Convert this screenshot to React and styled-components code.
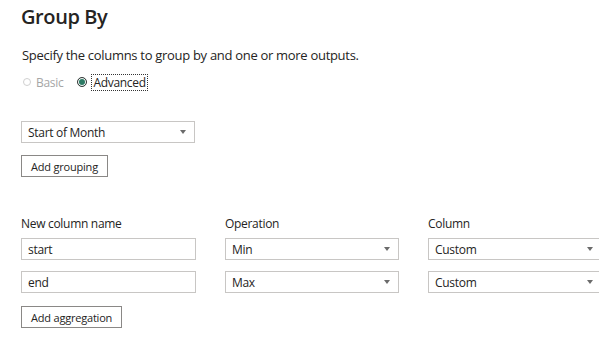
import React from 'react'
import styled, { createGlobalStyle } from 'styled-components'

const GlobalStyle = createGlobalStyle`
  html, body {
    margin: 0;
    padding: 0;
    background: #ffffff;
  }
  body {
    font-family: 'Open Sans', 'Noto Sans', sans-serif;
    color: #252423;
    letter-spacing: -0.3px;
    overflow: hidden;
  }
`

const Page = styled.div`
  width: 599px;
  height: 345px;
  padding: 2px 0 0 21px;
  box-sizing: border-box;
  overflow: hidden;
`

const Title = styled.h1`
  margin: 0;
  font-size: 20px;
  font-weight: 600;
  line-height: 30px;
  color: #252423;
  letter-spacing: -0.4px;
`

const Subtitle = styled.p`
  margin: 14px 0 0 1px;
  font-size: 13px;
  line-height: 18px;
  color: #252423;
`

const RadioRow = styled.div`
  display: flex;
  align-items: center;
  margin-top: 10px;
  height: 16px;
  gap: 12px;
`

const RadioOption = styled.label`
  display: flex;
  align-items: center;
  gap: 5px;
  font-size: 12px;
  color: ${(p) => (p.disabled ? '#a6a6a6' : '#252423')};
`

const RadioDot = styled.span`
  width: ${(p) => (p.checked ? 10 : 8)}px;
  height: ${(p) => (p.checked ? 10 : 8)}px;
  border-radius: 50%;
  box-sizing: border-box;
  border: 1px solid ${(p) => (p.checked ? '#3b3b3b' : '#d0d0d0')};
  background: ${(p) => (p.checked ? '#2b7a64' : '#fff')};
  box-shadow: ${(p) => (p.checked ? 'inset 0 0 0 1px #fff' : 'none')};
  margin-left: 2px;
`

const FocusText = styled.span`
  outline: 1px dotted #333;
  padding: 0 1px;
  line-height: 15px;
`

const Select = styled.div`
  width: 174px;
  height: 22px;
  box-sizing: border-box;
  border: 1px solid #c8c6c4;
  display: flex;
  align-items: center;
  justify-content: space-between;
  padding: 0 8px 0 6px;
  font-size: 12px;
  color: #252423;
  background: #fff;
  flex-shrink: 0;
`

const Caret = styled.span`
  width: 0;
  height: 0;
  border-left: 3.5px solid transparent;
  border-right: 3.5px solid transparent;
  border-top: 4px solid #6b6b6b;
`

const Button = styled.button`
  height: 22px;
  box-sizing: border-box;
  border: 1px solid #8a8886;
  background: #fff;
  padding: 0 9px;
  font-family: inherit;
  font-size: 11px;
  letter-spacing: -0.2px;
  color: #252423;
  display: block;
`

const Grouping = styled.div`
  margin-top: 31px;
  display: flex;
  flex-direction: column;
  gap: 12px;
  align-items: flex-start;
`

const Aggregations = styled.div`
  margin-top: 39px;
  display: grid;
  grid-template-columns: 175px 174px 174px;
  column-gap: 29px;
  row-gap: 11px;
  align-items: center;
`

const ColLabel = styled.div`
  font-size: 12px;
  line-height: 16px;
  color: #252423;
  margin-bottom: -5px;
`

const TextInput = styled.div`
  height: 22px;
  box-sizing: border-box;
  border: 1px solid #c8c6c4;
  display: flex;
  align-items: center;
  padding: 0 6px;
  font-size: 12px;
  color: #252423;
`

const Footer = styled.div`
  margin-top: 13px;
`

const rows = [
  { name: 'start', op: 'Min', col: 'Custom' },
  { name: 'end', op: 'Max', col: 'Custom' },
]

const Dropdown = ({ value }) => (
  <Select>
    <span>{value}</span>
    <Caret />
  </Select>
)

export default function App() {
  return (
    <>
      <GlobalStyle />
      <Page>
        <Title>Group By</Title>
        <Subtitle>Specify the columns to group by and one or more outputs.</Subtitle>
        <RadioRow>
          <RadioOption disabled>
            <RadioDot />
            Basic
          </RadioOption>
          <RadioOption>
            <RadioDot checked />
            <FocusText>Advanced</FocusText>
          </RadioOption>
        </RadioRow>

        <Grouping>
          <Dropdown value='Start of Month' />
          <Button>Add grouping</Button>
        </Grouping>

        <Aggregations>
          <ColLabel>New column name</ColLabel>
          <ColLabel>Operation</ColLabel>
          <ColLabel>Column</ColLabel>
          {rows.map((r) => (
            <React.Fragment key={r.name}>
              <TextInput>{r.name}</TextInput>
              <Dropdown value={r.op} />
              <Dropdown value={r.col} />
            </React.Fragment>
          ))}
        </Aggregations>
        <Footer>
          <Button>Add aggregation</Button>
        </Footer>
      </Page>
    </>
  )
}
